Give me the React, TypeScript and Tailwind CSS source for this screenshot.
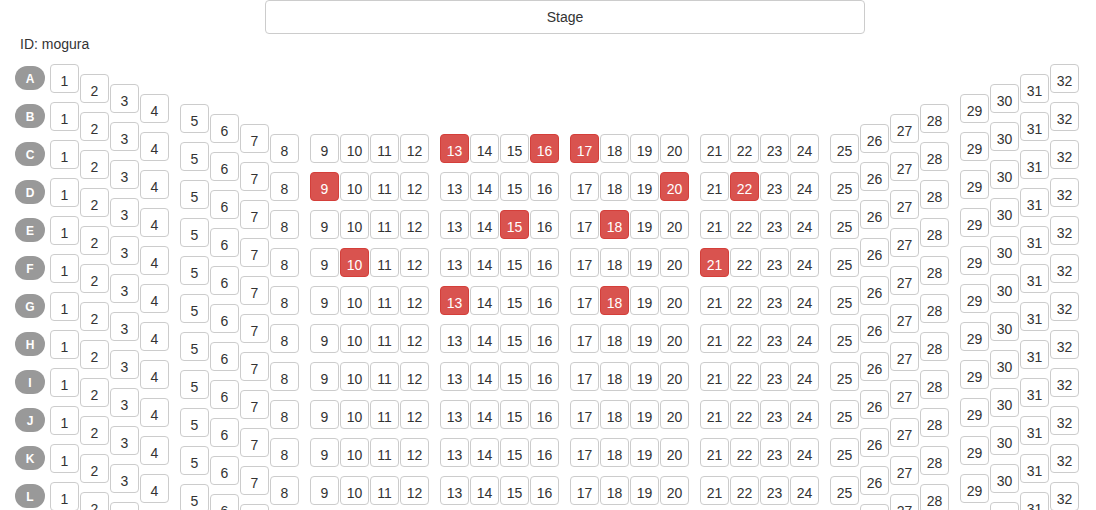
import React from "react";

const ROWS = ["A", "B", "C", "D", "E", "F", "G", "H", "I", "J", "K", "L"];

// vertical stagger of each seat inside its row (seat 1..32)
const SEAT_TOP = [
  "mt-[6px]", "mt-[16px]", "mt-[26px]", "mt-[36px]",
  "mt-[8px]", "mt-[18px]", "mt-[28px]", "mt-[38px]",
  "mt-0", "mt-0", "mt-0", "mt-0", "mt-0", "mt-0", "mt-0", "mt-0",
  "mt-0", "mt-0", "mt-0", "mt-0", "mt-0", "mt-0", "mt-0", "mt-0",
  "mt-[38px]", "mt-[28px]", "mt-[18px]", "mt-[8px]",
  "mt-[36px]", "mt-[26px]", "mt-[16px]", "mt-[6px]",
];

const taken: Record<string, number[]> = {
  C: [13, 16, 17],
  D: [9, 20, 22],
  E: [15, 18],
  F: [10, 21],
  G: [13, 18],
};

const exists = (row: string, n: number) => {
  if (row === "A") return n <= 4 || n >= 29;
  if (row === "B") return n <= 8 || n >= 25;
  return true;
};

const Seat: React.FC<{ row: string; n: number }> = ({ row, n }) => {
  const gap = n === 1 ? "ml-[5px]" : (n - 1) % 4 === 0 ? "ml-[11px]" : "ml-px";
  const busy = (taken[row] || []).includes(n);
  return (
    <div
      className={`${gap} ${SEAT_TOP[n - 1]} ${exists(row, n) ? "" : "invisible"} w-[29px] h-[29px] pt-[4px] shrink-0 rounded-[4px] border flex items-center justify-center leading-none ${
        busy ? "bg-[#d9534f] border-[#d43f3a] text-white" : "bg-white border-[#ccc] text-[#333]"
      }`}
    >
      {n}
    </div>
  );
};

export default function App() {
  const seats = Array.from({ length: 32 }, (_, i) => i + 1);
  return (
    <div className="h-screen overflow-hidden bg-white text-[14px] text-[#333] font-['Liberation_Sans',Arial,sans-serif]">
      <div className="ml-[265px] w-[600px] h-[34px] border border-[#ccc] rounded-[4px] flex items-center justify-center">
        Stage
      </div>
      <div className="ml-[20px] h-[20px] leading-[20px]">ID: mogura</div>
      <div className="mt-[4px]">
        {ROWS.map((row) => (
          <div key={row} className="flex items-start h-[38px]">
            <div className="ml-[15px] mt-[8px] w-[30px] h-[24px] pt-[2px] shrink-0 rounded-full bg-[#999] text-white text-[12px] font-bold leading-none flex items-center justify-center">
              {row}
            </div>
            {seats.map((n) => (
              <Seat key={n} row={row} n={n} />
            ))}
          </div>
        ))}
      </div>
    </div>
  );
}
